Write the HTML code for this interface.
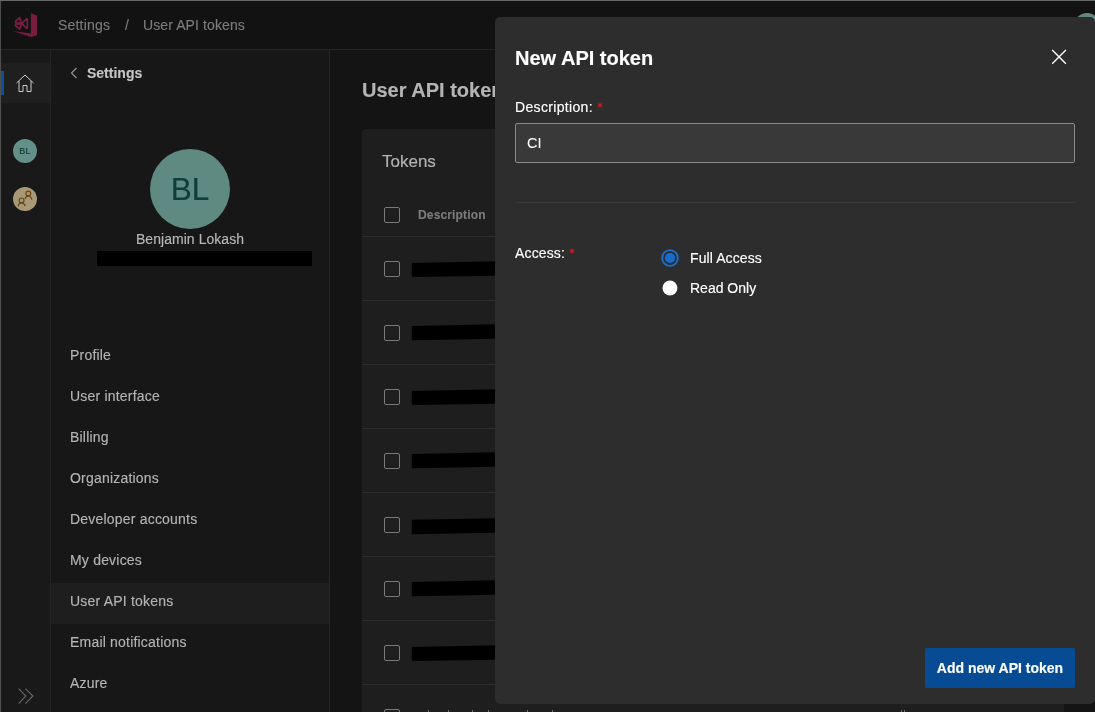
<!DOCTYPE html>
<html><head><meta charset="utf-8">
<style>
*{box-sizing:border-box;margin:0;padding:0}
html,body{width:1095px;height:712px;overflow:hidden;background:#141414;font-family:"Liberation Sans",sans-serif;-webkit-font-smoothing:antialiased}
.a{position:absolute;white-space:nowrap;line-height:1;will-change:transform;-webkit-text-stroke-width:0.15px}
#frame-top{position:absolute;left:0;top:0;width:1095px;height:1px;background:#67686b}
#frame-left{position:absolute;left:0;top:1px;width:1px;height:711px;background:#4f4f4f}
#header{position:absolute;left:1px;top:1px;width:1094px;height:48px;background:#121212}
#header-b{position:absolute;left:1px;top:49px;width:1094px;height:1px;background:#262626}
#rail{position:absolute;left:1px;top:50px;width:49px;height:662px;background:#191919}
#rail-b{position:absolute;left:50px;top:50px;width:1px;height:662px;background:#242424}
#side{position:absolute;left:51px;top:50px;width:278px;height:662px;background:#171717}
#side-b{position:absolute;left:329px;top:50px;width:1px;height:662px;background:#262626}
#main{position:absolute;left:330px;top:50px;width:765px;height:662px;background:#141414}
.nav{position:absolute;left:51px;width:278px;height:41px}
.nav span{will-change:transform;position:absolute;left:19px;top:11px;font-size:14px;color:#b4b4b4;line-height:1;letter-spacing:0.2px;-webkit-text-stroke-width:0.15px}
.card{position:absolute;left:362px;top:129px;width:702px;height:700px;background:#1e1e1e;border-radius:4px}
.rowb{position:absolute;left:362px;width:702px;height:1px;background:#2c2c2c}
.cb{position:absolute;left:384px;width:16px;height:16px;border:1.5px solid #7a7a7a;border-radius:2px}
.bar{position:absolute;left:411px;width:90px;height:15px;background:#000}
#modal{position:absolute;left:495px;top:17px;width:600px;height:687px;background:#2d2d2d;border-radius:5px}
</style></head><body>
<div id="frame-top"></div>
<div id="frame-left"></div>
<div id="header"></div>
<div id="header-b"></div>
<!-- logo -->
<svg class="a" style="left:10px;top:10px" width="30" height="30" viewBox="0 0 30 30">
  <path d="M20.9 3.2 L27 5.6 L27 25.2 L20.9 26.9 Z" fill="#7a1c42"/>
  <path d="M3 20.9 L20.9 23.4 L20.9 26.9 Z" fill="#7a1c42"/>
  <g fill="none" stroke="#7a1c42" stroke-width="1.7" stroke-linejoin="round">
    <path d="M11.6 13.4 L9.6 7.9 L5.6 11.2 L5.6 12.8 Z"/>
    <path d="M11.6 13.4 L5.6 14.2 L5.6 15.8 L9.6 19.2 Z"/>
    <path d="M11.6 13.4 L16.6 8.9 Q17.4 8.7 17.4 9.6 L17.4 17.6 Q17.4 18.5 16.6 18.1 Z"/>
  </g>
</svg>
<div class="a" style="left:58px;top:18.4px;font-size:14px;color:#7c7c7c;letter-spacing:0.2px">Settings</div>
<div class="a" style="left:125px;top:18.4px;font-size:14px;color:#7c7c7c">/</div>
<div class="a" style="left:143px;top:18.4px;font-size:14px;color:#7c7c7c;letter-spacing:0.1px">User API tokens</div>
<!-- top-right avatar (partially hidden) -->
<div class="a" style="left:1074px;top:13px;width:26px;height:26px;border-radius:50%;background:#5f8a80"></div>

<div id="rail"></div>
<div id="rail-b"></div>
<div class="a" style="left:1px;top:63px;width:49px;height:40px;background:#1f1f1f"></div>
<div class="a" style="left:1px;top:71px;width:3px;height:24px;background:#0d4f98"></div>
<svg class="a" style="left:15px;top:73px" width="20" height="20" viewBox="0 0 20 20">
  <path d="M1.5 10 L10 2 L18.5 10 M4 8 V18.5 H8 V12.5 H12 V18.5 H16 V8" fill="none" stroke="#cdcdcd" stroke-width="1"/>
</svg>
<div class="a" style="left:13px;top:139px;width:24px;height:24px;border-radius:50%;background:#63918a;color:#0b3b33;font-size:9px;line-height:24px;text-align:center;letter-spacing:0.2px">BL</div>
<div class="a" style="left:13px;top:187px;width:24px;height:24px;border-radius:50%;background:#a89877"></div>
<svg class="a" style="left:13px;top:187px" width="24" height="24" viewBox="0 0 24 24">
  <g fill="none" stroke="#6a4510" stroke-width="1.15">
    <circle cx="8.6" cy="13.4" r="2.4"/><path d="M5 19.4 C5.6 17 7 15.9 8.6 15.9 C10.2 15.9 11.6 17 12.2 19.2"/>
    <circle cx="15.3" cy="6.5" r="2.4"/><path d="M12 12 C12.6 9.9 13.8 9 15.3 9 C16.9 9 18.2 10.1 18.8 12.6"/>
  </g>
</svg>
<svg class="a" style="left:17px;top:687px" width="18" height="18" viewBox="0 0 18 18">
  <path d="M1.6 1.6 L8.9 9 L1.6 16.6 M8.4 1.6 L15.9 9 L8.4 16.6" fill="none" stroke="#686868" stroke-width="1.1"/>
</svg>

<div id="side"></div>
<div id="side-b"></div>
<svg class="a" style="left:70px;top:67px" width="8" height="12" viewBox="0 0 8 12">
  <path d="M6.5 1 L1.5 6 L6.5 11" fill="none" stroke="#9a9a9a" stroke-width="1.1"/>
</svg>
<div class="a" style="left:87px;top:66px;font-size:14px;font-weight:bold;color:#c4c4c4">Settings</div>
<div class="a" style="left:150px;top:149px;width:80px;height:80px;border-radius:50%;background:#5f8a82"></div>
<div class="a" style="left:150px;top:174px;width:80px;font-size:31.5px;color:#0c3f36;text-align:center">BL</div>
<div class="a" style="left:90px;top:232.2px;width:200px;font-size:14px;color:#b8b8b8;text-align:center;letter-spacing:0.05px">Benjamin Lokash</div>
<div class="a" style="left:97px;top:251px;width:215px;height:15px;background:#000"></div>

<div class="nav" style="top:337px"><span>Profile</span></div>
<div class="nav" style="top:378px"><span>User interface</span></div>
<div class="nav" style="top:419px"><span>Billing</span></div>
<div class="nav" style="top:460px"><span>Organizations</span></div>
<div class="nav" style="top:501px"><span>Developer accounts</span></div>
<div class="nav" style="top:542px"><span>My devices</span></div>
<div class="nav" style="top:583px;background:#1e1e1e"><span>User API tokens</span></div>
<div class="nav" style="top:624px"><span>Email notifications</span></div>
<div class="nav" style="top:665px"><span>Azure</span></div>

<div id="main"></div>
<div class="a" style="left:362px;top:80px;font-size:20px;font-weight:bold;color:#b4b4b4">User API tokens</div>
<div class="card"></div>
<div class="a" style="left:382px;top:153px;font-size:17px;color:#b4b4b4">Tokens</div>
<div class="cb" style="top:207px"></div>
<div class="a" style="left:418px;top:209px;font-size:12px;font-weight:bold;color:#7c7c7c;letter-spacing:0.15px">Description</div>
<div class="rowb" style="top:236px"></div>
<div class="cb" style="top:261px"></div>
<div class="rowb" style="top:300px"></div>
<div class="cb" style="top:325px"></div>
<div class="rowb" style="top:364px"></div>
<div class="cb" style="top:389px"></div>
<div class="rowb" style="top:428px"></div>
<div class="cb" style="top:453px"></div>
<div class="rowb" style="top:492px"></div>
<div class="cb" style="top:517px"></div>
<div class="rowb" style="top:556px"></div>
<div class="cb" style="top:581px"></div>
<div class="rowb" style="top:620px"></div>
<div class="cb" style="top:645px"></div>
<div class="rowb" style="top:684px"></div>
<div class="cb" style="top:709px"></div>
<svg class="a" style="left:0;top:0" width="1095" height="712" viewBox="0 0 1095 712"><g fill="#000"><polygon points="411.8,263.0 497,261.17 497,275.8 411.8,277.1"/><polygon points="411.8,325.9 497,324.37 497,338.8 411.8,340.2"/><polygon points="411.8,391.0 497,389.17 497,403.8 411.8,405.1"/><polygon points="411.8,453.9 497,452.37 497,466.8 411.8,468.2"/><polygon points="411.8,519.8 497,518.37 497,532.7 411.8,534.2"/><polygon points="411.8,581.9 497,580.37 497,594.8 411.8,596.2"/><polygon points="411.8,647.0 497,645.1700000000001 497,659.8 411.8,661.1"/></g></svg>

<div class="a" style="left:428px;top:710px;width:1.4px;height:2px;background:#6e6e6e"></div><div class="a" style="left:448px;top:710px;width:1.4px;height:2px;background:#6e6e6e"></div><div class="a" style="left:472px;top:710px;width:1.4px;height:2px;background:#6e6e6e"></div><div class="a" style="left:488px;top:710px;width:1.4px;height:2px;background:#6e6e6e"></div><div class="a" style="left:527px;top:710px;width:1.4px;height:2px;background:#6e6e6e"></div><div class="a" style="left:552px;top:710px;width:1.4px;height:2px;background:#6e6e6e"></div><div class="a" style="left:901px;top:710px;width:1.4px;height:2px;background:#6e6e6e"></div><div class="a" style="left:904px;top:710px;width:1.4px;height:2px;background:#6e6e6e"></div>
<div id="modal"></div>
<div class="a" style="left:515px;top:48px;font-size:20px;font-weight:bold;color:#ffffff">New API token</div>
<svg class="a" style="left:1051px;top:49px" width="16" height="16" viewBox="0 0 16 16">
  <path d="M1.2 1.1 L14.9 14.8 M14.9 1.1 L1.2 14.8" stroke="#ffffff" stroke-width="1.4"/>
</svg>
<div class="a" style="left:515px;top:100px;font-size:14px;color:#ffffff;letter-spacing:0.33px">Description:</div><svg class="a" style="left:597px;top:101.5px" width="6" height="6" viewBox="0 0 6 6"><path d="M3 0.3 V5.7 M0.66 1.65 L5.34 4.35 M0.66 4.35 L5.34 1.65" stroke="#ea1420" stroke-width="1"/></svg>
<div class="a" style="left:515px;top:123px;width:560px;height:40px;background:#393939;border:1px solid #8a8a8a;border-radius:2px"></div>
<div class="a" style="left:527px;top:136.3px;font-size:14.5px;color:#ffffff;-webkit-text-stroke-width:0.05px">CI</div>
<div class="a" style="left:515px;top:202px;width:560px;height:1px;background:#383838"></div>
<div class="a" style="left:515px;top:246px;font-size:14px;color:#ffffff;letter-spacing:0.15px">Access:</div><svg class="a" style="left:569.4px;top:247.6px" width="6" height="6" viewBox="0 0 6 6"><path d="M3 0.3 V5.7 M0.66 1.65 L5.34 4.35 M0.66 4.35 L5.34 1.65" stroke="#ea1420" stroke-width="1"/></svg>
<svg class="a" style="left:660px;top:248px" width="20" height="20" viewBox="0 0 20 20"><circle cx="10" cy="10" r="7.85" fill="none" stroke="#1670d2" stroke-width="1.9"/><circle cx="10" cy="10" r="5.1" fill="#166dcc"/></svg>
<div class="a" style="left:690px;top:251px;font-size:14px;color:#ffffff;letter-spacing:0.1px">Full Access</div>
<svg class="a" style="left:660px;top:278px" width="20" height="20" viewBox="0 0 20 20"><circle cx="9.95" cy="10" r="7.45" fill="#ffffff"/></svg>
<div class="a" style="left:690px;top:281px;font-size:14px;color:#ffffff">Read Only</div>
<div class="a" style="left:925px;top:648px;width:150px;height:40px;background:#074b94;border-radius:2px"></div>
<div class="a" style="left:925px;top:661px;width:150px;font-size:14px;font-weight:bold;color:#ffffff;text-align:center">Add new API token</div>
</body></html>
